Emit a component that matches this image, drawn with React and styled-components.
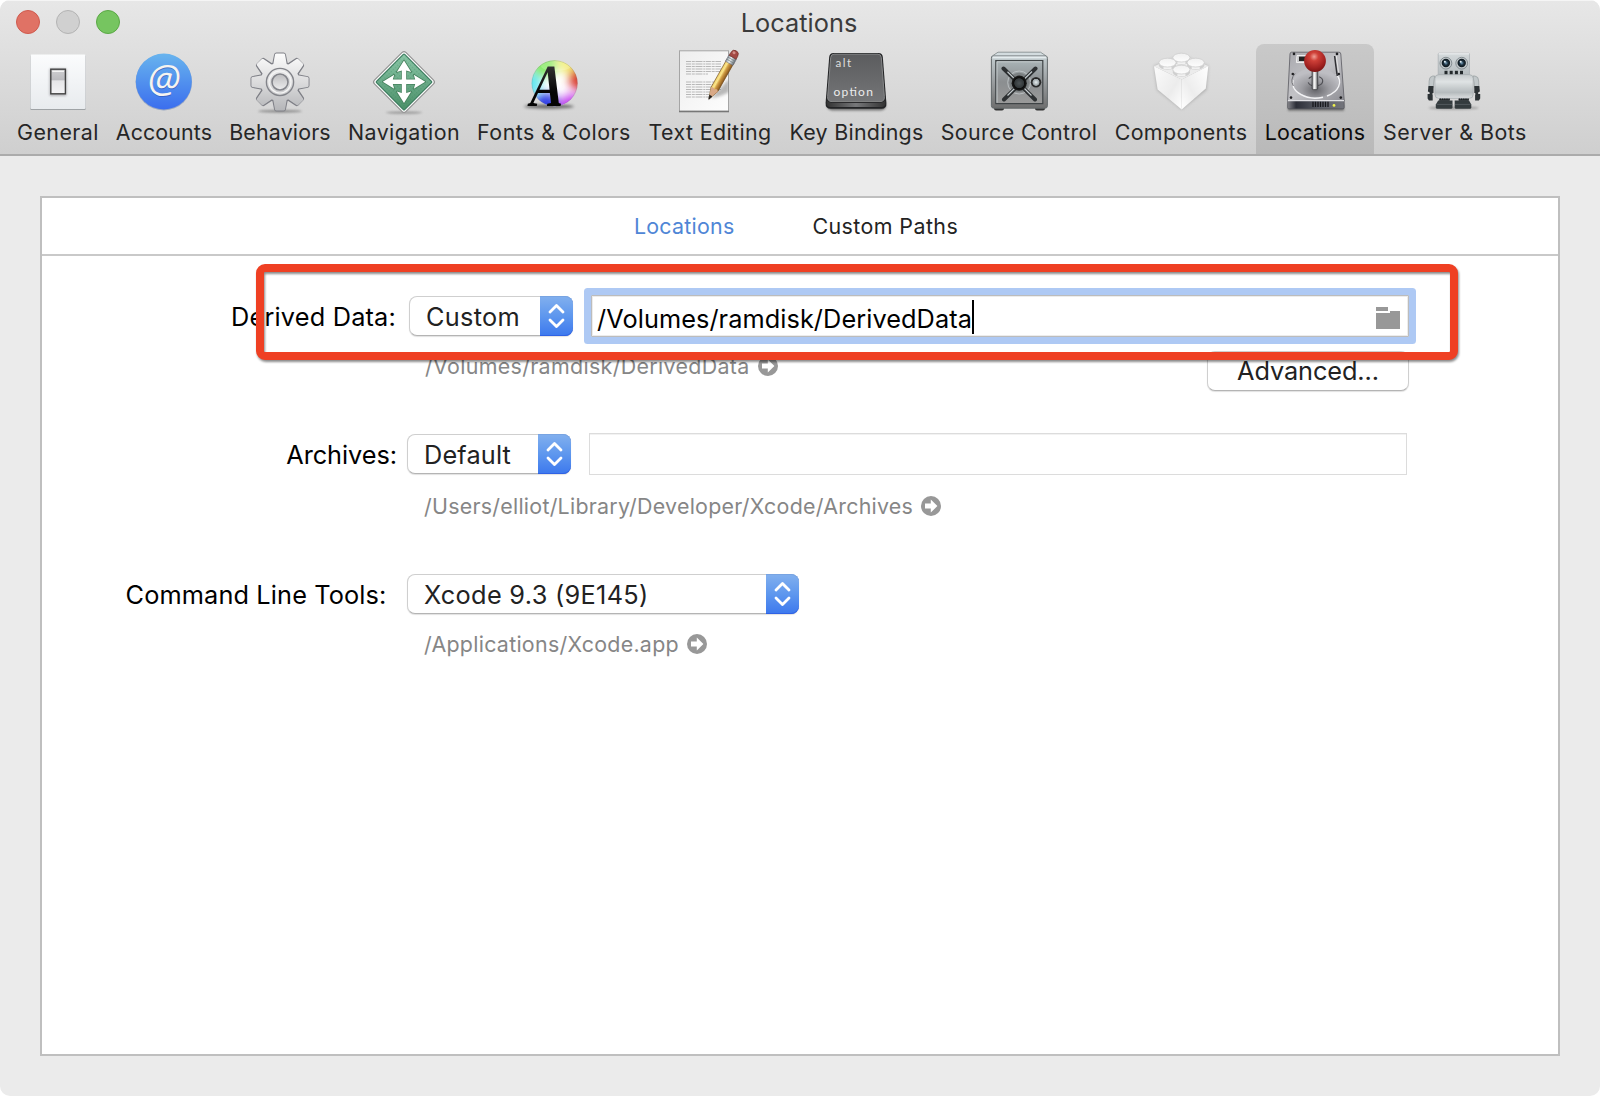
import React from "react";
import styled, { createGlobalStyle, css } from "styled-components";

const GlobalStyle = createGlobalStyle`
  *, *::before, *::after { box-sizing: border-box; }
  html, body { margin: 0; padding: 0; background: #fff; }
  body { font-family: Inter, "Liberation Sans", sans-serif; color: #000; }
`;

const SMALL = "21.4px";
const LARGE = "25.3px";

/* ---------- window ---------- */

const Window = styled.div`
  display: flex;
  flex-direction: column;
  width: 1600px;
  height: 1096px;
  background: #ebebeb;
  border-radius: 10px;
  overflow: hidden;
`;

const Header = styled.header`
  flex: none;
  height: 156px;
  display: flex;
  flex-direction: column;
  background: linear-gradient(#e7e7e7, #cfcfcf);
  border-top: 1px solid #f5f5f5;
  border-bottom: 2px solid #ababab;
`;

const TitleBar = styled.div`
  height: 43px;
  padding: 0 30px 2px 16px;
  display: grid;
  grid-template-columns: 104px 1fr 104px;
  align-items: center;
`;

const Lights = styled.div`
  display: flex;
  gap: 16px;
`;

const Light = styled.span`
  width: 24px;
  height: 24px;
  border-radius: 50%;
  background: ${(p) => p.$fill};
  border: 1px solid ${(p) => p.$edge};
`;

const Title = styled.h1`
  margin: 0;
  padding: 3px 0 0 12px;
  text-align: center;
  font-size: ${LARGE};
  font-weight: 400;
  line-height: 36px;
  letter-spacing: 0.05px;
  color: #3b3b3b;
`;

const Toolbar = styled.nav`
  display: flex;
  padding-left: 9px;
`;

const ToolItem = styled.button`
  width: ${(p) => p.$w}px;
  height: 110px;
  padding: 6px 0 0;
  border: 0;
  border-radius: 8px 8px 0 0;
  display: flex;
  flex-direction: column;
  align-items: center;
  font-family: inherit;
  color: ${(p) => (p.$active ? "#0c0c0c" : "#262626")};
  background: ${(p) => (p.$active ? "linear-gradient(#c9c9c9, #b9b9b9)" : "none")};
`;

const ToolLabel = styled.span`
  margin-top: 4px;
  font-size: ${SMALL};
  line-height: 28px;
  white-space: nowrap;
  letter-spacing: ${(p) => p.$ls}px;
`;

const Icon = styled.svg`
  display: block;
  width: 64px;
  height: 64px;
  flex: none;
  overflow: visible;
`;

/* ---------- panel ---------- */

const Content = styled.main`
  flex: 1;
  padding: 40px;
  display: flex;
`;

const Panel = styled.section`
  flex: 1;
  display: flex;
  flex-direction: column;
  background: #fff;
  border: 2px solid #bfbfbf;
`;

const Tabs = styled.div`
  height: 58px;
  flex: none;
  display: flex;
  justify-content: center;
  gap: 78px;
  padding: 14px 8px 0 0;
  border-bottom: 2px solid #c9c9c9;
`;

const Tab = styled.span`
  font-size: ${SMALL};
  line-height: 28px;
  letter-spacing: ${(p) => p.$ls}px;
  color: ${(p) => (p.$active ? "#4f86d6" : "#232323")};
`;

const Form = styled.div`
  position: relative;
  flex: 1;
  display: flex;
  flex-direction: column;
  padding: 32px 0 0;
`;

const Group = styled.div`
  display: flex;
  flex-direction: column;
  margin-top: ${(p) => p.$top || 0}px;
`;

const Row = styled.div`
  display: flex;
  align-items: center;
  height: ${(p) => p.$h}px;
`;

const Label = styled.label`
  width: ${(p) => p.$w}px;
  padding: 2px ${(p) => p.$gap}px 0 0;
  text-align: right;
  font-size: ${LARGE};
  line-height: 36px;
  white-space: nowrap;
  letter-spacing: ${(p) => p.$ls}px;
`;

const control = css`
  background: #fff;
  border: 1px solid #cfcfcf;
  border-bottom-color: #b4b4b4;
  border-radius: 8px;
  box-shadow: 0 1px 1px rgba(0, 0, 0, 0.12);
`;

const Popup = styled.div`
  ${control}
  width: ${(p) => p.$w}px;
  height: 40px;
  display: flex;
  justify-content: space-between;
`;

const PopupText = styled.span`
  padding: 2px 0 0 ${(p) => p.$pad}px;
  font-size: ${LARGE};
  line-height: 36px;
  letter-spacing: ${(p) => p.$ls}px;
  color: #222;
`;

const Stepper = styled.span`
  width: 33px;
  height: 40px;
  margin: -1px -1px 0 0;
  display: flex;
  align-items: center;
  justify-content: center;
  border-radius: 0 8px 8px 0;
  background: linear-gradient(#82b0ee, #5e97ee 50%, #3c78ee);
  box-shadow: inset 0 -1px 0 #2f62e4, inset 0 1px 0 #78a4e2;
`;

const PathField = styled.div`
  flex: none;
  width: 818px;
  height: 42px;
  margin-left: 18px;
  padding: 0 8px 0 5px;
  display: flex;
  align-items: center;
  background: #fff;
  border: ${(p) => (p.$focus ? "1px solid #bcbcbc" : "1px solid #dcdcdc")};
  box-shadow: inset 0 1px 0 #f2f2f2;
  ${(p) =>
    p.$focus &&
    css`
      border-radius: 1px;
      box-shadow: 0 0 0 7px #aec9f4, inset 0 0 0 1px #ececec;
    `}
`;

const FieldText = styled.span`
  padding-top: 6px;
  font-size: ${LARGE};
  line-height: 36px;
  letter-spacing: 0.075px;
`;

const Caret = styled.span`
  width: 2px;
  height: 34px;
  margin-top: 2px;
  background: #000;
`;

const FolderIcon = styled.svg`
  width: 24px;
  height: 22px;
  margin: 4px 0 0 auto;
`;

const SubRow = styled.div`
  display: flex;
  align-items: flex-start;
  justify-content: space-between;
  padding: ${(p) => p.$top}px 149px 0 ${(p) => p.$left}px;
`;

const PathLink = styled.span`
  display: flex;
  align-items: center;
  gap: 8px;
  height: 28px;
  font-size: ${SMALL};
  line-height: 28px;
  color: #868686;
  letter-spacing: ${(p) => p.$ls}px;
`;

const Button = styled.button`
  ${control}
  width: 202px;
  height: 40px;
  margin: -1px 0 1px;
  padding: 0;
  font-family: inherit;
  font-size: ${LARGE};
  line-height: 38px;
  letter-spacing: -0.1px;
  color: #222;
`;

const Highlight = styled.div`
  position: absolute;
  left: 214px;
  top: 8px;
  width: 1202px;
  height: 96px;
  border: 8px solid #ef4023;
  border-radius: 9px;
  filter: drop-shadow(1px 2px 1px rgba(0, 0, 0, 0.45));
  pointer-events: none;
`;

/* ---------- small glyphs ---------- */

const Chevrons = () => (
  <svg width="17" height="26" viewBox="0 0 17 26" fill="none" stroke="#fff" strokeWidth="2.8" strokeLinecap="round" strokeLinejoin="round">
    <path d="M2 9 L8.5 2.4 L15 9 M2 17 L8.5 23.6 L15 17" />
  </svg>
);

const GoArrow = () => (
  <svg width="20" height="20" viewBox="0 0 20 20">
    <circle cx="10" cy="10" r="10" fill="#989898" />
    <path d="M4 7.6 H9.8 V3.4 L16.4 10 L9.8 16.6 V12.4 H4 Z" fill="#fff" />
  </svg>
);

const Folder = () => (
  <FolderIcon viewBox="0 0 24 22">
    <path d="M0 0 H12 V4 H0 Z M0 6 H14 V4 H24 V22 H0 Z" fill="#989898" />
  </FolderIcon>
);

/* ---------- toolbar icons ---------- */

const GeneralIcon = () => (
  <Icon viewBox="0 0 64 64">
    <defs>
      <linearGradient id="gen" x1="0" y1="0" x2="0" y2="1">
        <stop offset="0" stopColor="#fbfcfd" /><stop offset="1" stopColor="#e8ebee" />
      </linearGradient>
      <linearGradient id="genSw" x1="0" y1="0" x2="0" y2="1">
        <stop offset="0" stopColor="#cfcfd1" /><stop offset=".42" stopColor="#bcbcc0" />
        <stop offset=".48" stopColor="#e6e6e8" /><stop offset="1" stopColor="#f4f4f6" />
      </linearGradient>
      <filter id="soft1" x="-50%" y="-50%" width="200%" height="200%"><feGaussianBlur stdDeviation="1.3" /></filter>
    </defs>
    <rect x="4.3" y="5" width="55.4" height="55" rx="1" fill="#9fa3a6" />
    <rect x="4.5" y="4.5" width="55" height="54.5" rx="1" fill="url(#gen)" />
    <rect x="23.5" y="18.5" width="17" height="27.5" rx="1" fill="#8e8e92" opacity=".6" filter="url(#soft1)" />
    <rect x="24.8" y="19.2" width="14.6" height="24.6" fill="url(#genSw)" stroke="#444" strokeWidth="1.4" />
    <rect x="26.2" y="20.8" width="11.8" height="1.2" fill="#f4f4f4" />
  </Icon>
);

const AccountsIcon = () => (
  <Icon viewBox="0 0 64 64">
    <defs>
      <linearGradient id="acc" x1="0" y1="0" x2="0" y2="1">
        <stop offset="0" stopColor="#68b4ee" /><stop offset="1" stopColor="#3b6eee" />
      </linearGradient>
    </defs>
    <circle cx="31.8" cy="32.3" r="28.2" fill="#6e87b4" opacity=".6" />
    <circle cx="31.8" cy="31.5" r="28" fill="url(#acc)" />
    <text x="32.3" y="43.8" textAnchor="middle" fontFamily="Open Sans, Noto Sans, sans-serif" fontStyle="italic" fontSize="38.5" fill="#2c4fae" opacity=".6">@</text>
    <text x="32" y="42.8" textAnchor="middle" fontFamily="Open Sans, Noto Sans, sans-serif" fontStyle="italic" fontSize="38.5" fill="#f6f4f0">@</text>
  </Icon>
);

const TEETH = [0, 45, 90, 135, 180, 225, 270, 315];

const BehaviorsIcon = () => (
  <Icon viewBox="0 0 64 64">
    <defs>
      <linearGradient id="gear" gradientUnits="userSpaceOnUse" x1="0" y1="3" x2="0" y2="61">
        <stop offset="0" stopColor="#fdfdfd" /><stop offset=".5" stopColor="#dcdcdd" /><stop offset="1" stopColor="#b4b5b8" />
      </linearGradient>
      <linearGradient id="gearIn" x1="0" y1="0" x2="0" y2="1">
        <stop offset="0" stopColor="#bcbcbe" /><stop offset="1" stopColor="#ededee" />
      </linearGradient>
      <filter id="soft2" x="-20%" y="-200%" width="140%" height="500%"><feGaussianBlur stdDeviation="1.2" /></filter>
      <path id="tooth" d="M27 4.4 Q27.3 3.4 28.4 3.4 H35.6 Q36.7 3.4 37 4.4 L39 14.5 H25 Z" />
    </defs>
    <ellipse cx="32" cy="61.3" rx="22" ry="1.5" fill="#555" opacity=".55" filter="url(#soft2)" />
    <g fill="none" stroke="#7e7f86" strokeWidth="1.8">
      {TEETH.map((a) => <use key={a} href="#tooth" transform={`rotate(${a} 32 32)`} />)}
      <circle cx="32" cy="32" r="19.5" />
    </g>
    <g fill="url(#gear)">
      <path d="M27 4.4 Q27.3 3.4 28.4 3.4 H35.6 Q36.7 3.4 37 4.4 L39 16 H25 Z" />
      <path d="M27 59.6 Q27.3 60.6 28.4 60.6 H35.6 Q36.7 60.6 37 59.6 L39 48 H25 Z" />
      <path d="M4.4 27 Q3.4 27.3 3.4 28.4 V35.6 Q3.4 36.7 4.4 37 L16 39 V25 Z" />
      <path d="M59.6 27 Q60.6 27.3 60.6 28.4 V35.6 Q60.6 36.7 59.6 37 L48 39 V25 Z" />
      <path d="M9 15.4 Q8.3 14.4 9.2 13.6 L13.6 9.2 Q14.4 8.3 15.4 9 L25.6 16 L16 25.6 Z" />
      <path d="M55 15.4 Q55.7 14.4 54.8 13.6 L50.4 9.2 Q49.6 8.3 48.6 9 L38.4 16 L48 25.6 Z" />
      <path d="M9 48.6 Q8.3 49.6 9.2 50.4 L13.6 54.8 Q14.4 55.7 15.4 55 L25.6 48 L16 38.4 Z" />
      <path d="M55 48.6 Q55.7 49.6 54.8 50.4 L50.4 54.8 Q49.6 55.7 48.6 55 L38.4 48 L48 38.4 Z" />
      <circle cx="32" cy="32" r="19.3" />
    </g>
    <circle cx="32" cy="32" r="13.6" fill="none" stroke="#83848a" strokeWidth="1.4" />
    <circle cx="32" cy="32" r="11" fill="none" stroke="#f5f5f5" strokeWidth="1.2" />
    <circle cx="32" cy="32" r="8" fill="url(#gearIn)" stroke="#83848a" strokeWidth="1.6" />
  </Icon>
);

const NavigationIcon = () => (
  <Icon viewBox="0 0 64 64">
    <defs>
      <linearGradient id="nav" x1="0" y1="0" x2="1" y2="1">
        <stop offset="0" stopColor="#8cc8a8" /><stop offset=".5" stopColor="#6bab89" /><stop offset="1" stopColor="#4b9068" />
      </linearGradient>
      <pattern id="weave" width="3" height="3" patternUnits="userSpaceOnUse">
        <rect width="1.4" height="1.4" fill="#2f7d54" opacity=".28" />
      </pattern>
      <filter id="soft3" x="-20%" y="-200%" width="140%" height="500%"><feGaussianBlur stdDeviation="1" /></filter>
    </defs>
    <ellipse cx="32" cy="62.6" rx="18" ry="1.1" fill="#555" opacity=".5" filter="url(#soft3)" />
    <rect x="9.8" y="9.8" width="44.4" height="44.4" rx="2.6" transform="rotate(45 32 32)" fill="#fff" stroke="#939393" strokeWidth="1.2" />
    <rect x="12" y="12" width="40" height="40" rx="1" transform="rotate(45 32 32)" fill="url(#nav)" stroke="#35775a" strokeWidth="1" />
    <rect x="12" y="12" width="40" height="40" rx="1" transform="rotate(45 32 32)" fill="url(#weave)" />
    <path d="M32 10.5 L39.2 22 L34.2 20.6 V29.6 H43.2 L41.8 24.8 L53.2 31.8 L41.8 38.8 L43.2 34 H34.2 V43 L39.2 41.6 L32 53 L24.8 41.6 L29.8 43 V34 H20.8 L22.2 38.8 L10.8 31.8 L22.2 24.8 L20.8 29.6 H29.8 V20.6 L24.8 22 Z" fill="#fff" stroke="#47835f" strokeWidth="1.6" paintOrder="stroke" strokeLinejoin="round" />
  </Icon>
);

const FontsIcon = () => (
  <Icon viewBox="0 0 64 64">
    <defs>
      <clipPath id="globe"><circle cx="32.6" cy="33.3" r="23" /></clipPath>
      <filter id="soft4" x="-60%" y="-60%" width="220%" height="220%"><feGaussianBlur stdDeviation="5" /></filter>
      <filter id="soft5" x="-30%" y="-200%" width="160%" height="500%"><feGaussianBlur stdDeviation="1.8" /></filter>
      <linearGradient id="inkA" x1="0" y1="0" x2="0" y2="1">
        <stop offset="0" stopColor="#4a4a4a" /><stop offset=".6" stopColor="#050505" />
      </linearGradient>
    </defs>
    <ellipse cx="27" cy="56.5" rx="25" ry="2.2" fill="#000" opacity=".5" filter="url(#soft5)" />
    <g clipPath="url(#globe)">
      <rect x="9" y="10" width="48" height="48" fill="#fff" />
      <g filter="url(#soft4)">
        <circle cx="22" cy="14" r="13" fill="#86ea62" />
        <circle cx="46" cy="12" r="11" fill="#f3ee6c" />
        <circle cx="59" cy="29" r="12" fill="#d8342c" />
        <circle cx="50" cy="56" r="12" fill="#c53df0" />
        <circle cx="24" cy="57" r="14" fill="#3340e6" />
        <circle cx="7" cy="34" r="12" fill="#5fe6f0" />
      </g>
      <ellipse cx="34" cy="16" rx="15" ry="5" fill="#fff" opacity=".2" />
    </g>
    <circle cx="32.6" cy="33.3" r="22.7" fill="none" stroke="#777" strokeOpacity=".35" strokeWidth=".8" />
    <g transform="translate(5 56) skewX(-10)">
      <text x="0" y="0" fontFamily="Liberation Serif, serif" fontWeight="700" fontSize="60" textLength="34" lengthAdjust="spacingAndGlyphs" fill="url(#inkA)">A</text>
    </g>
  </Icon>
);

const LINES = [11.5, 14, 16.5, 19, 21.5, 24, 32, 34.5, 37, 39.5, 42, 44.5, 47];

const TextEditingIcon = () => (
  <Icon viewBox="0 0 64 64">
    <defs>
      <linearGradient id="page" x1="0" y1="0" x2="1" y2="1">
        <stop offset="0" stopColor="#eeeeee" /><stop offset="1" stopColor="#fdfdfd" />
      </linearGradient>
      <linearGradient id="wood" gradientUnits="userSpaceOnUse" x1="0" y1="0" x2="8" y2="0">
        <stop offset="0" stopColor="#f0cf68" /><stop offset=".3" stopColor="#fbe68c" /><stop offset=".55" stopColor="#cf9a42" /><stop offset="1" stopColor="#87541c" />
      </linearGradient>
      <linearGradient id="metal" gradientUnits="userSpaceOnUse" x1="0" y1="0" x2="8" y2="0">
        <stop offset="0" stopColor="#9aa6ac" /><stop offset=".4" stopColor="#eef3f5" /><stop offset="1" stopColor="#6d777c" />
      </linearGradient>
      <filter id="soft6" x="-30%" y="-30%" width="160%" height="160%"><feGaussianBlur stdDeviation="1.5" /></filter>
      <clipPath id="pageClip"><rect x="1" y="0" width="50" height="61" /></clipPath>
    </defs>
    <rect x="1" y="2" width="50" height="61" fill="#888" opacity=".35" />
    <rect x="1.5" y=".8" width="49" height="60.4" fill="url(#page)" stroke="#a5a5a5" strokeWidth="1" />
    <path d="M1 61.3 H51" stroke="#777" strokeWidth="1.2" />
    {LINES.map((y, i) => (
      <path key={y} d={`M8 ${y} H${i === 5 ? 30 : i > 9 ? 33 : 43}`} stroke="#b8b8b8" strokeWidth="1" strokeDasharray="5 .8 3 .7 7 .8 2 .6" />
    ))}
    <path d="M33 48 L51 29 V42 Q42 47 33 48 Z" fill="#777" opacity=".5" filter="url(#soft6)" clipPath="url(#pageClip)" />
    <g transform="translate(31 49) rotate(29.5) translate(-4 -52)">
      <path d="M0 8 H8 V41 L4 52 L0 41 Z" fill="url(#wood)" stroke="#6e4a1c" strokeWidth=".6" />
      <path d="M0 41 Q2 38.5 4 41 Q6 38.5 8 41 L4 52 Z" fill="#d9a987" />
      <path d="M2.6 48.4 H5.4 L4 52.4 Z" fill="#1c1c1c" stroke="#1c1c1c" strokeWidth=".6" />
      <rect x="-.3" y="4" width="8.6" height="7" fill="url(#metal)" stroke="#667" strokeWidth=".5" />
      <path d="M-.3 6.3 H8.3 M-.3 8.6 H8.3" stroke="#6c767b" strokeWidth=".6" />
      <path d="M0 4 V1 Q0 -3.4 4 -3.4 Q8 -3.4 8 1 V4 Z" fill="#a34a45" stroke="#713029" strokeWidth=".6" />
      <ellipse cx="3" cy="-.6" rx="1.6" ry="1.4" fill="#d38f88" />
    </g>
  </Icon>
);

const KeyIcon = () => (
  <Icon viewBox="0 0 64 64">
    <defs>
      <linearGradient id="key" x1="0" y1="0" x2="0" y2="1">
        <stop offset="0" stopColor="#5b5c5e" /><stop offset="1" stopColor="#747577" />
      </linearGradient>
      <linearGradient id="keyB" x1="0" y1="0" x2="1" y2="0">
        <stop offset="0" stopColor="#333" /><stop offset=".5" stopColor="#77787a" /><stop offset="1" stopColor="#333" />
      </linearGradient>
      <filter id="soft7" x="-20%" y="-20%" width="140%" height="150%"><feGaussianBlur stdDeviation="1.2" /></filter>
    </defs>
    <rect x="2" y="50" width="59" height="10.5" rx="5" fill="#333" opacity=".6" filter="url(#soft7)" />
    <path d="M8.5 3 H53.5 Q57.4 3 57.8 7 L61.4 53 Q61.8 58.8 56.4 58.8 H5.8 Q.2 58.8 .6 53 L4.2 7 Q4.6 3 8.5 3 Z" fill="#222325" />
    <path d="M1.7 50 Q4 53 8 53 H54 Q58 53 60.3 50 L60.4 53 Q60.6 57 56.4 57 H5.6 Q1.4 57 1.6 53 Z" fill="url(#keyB)" />
    <path d="M9 4.2 H53 Q56 4.2 56.3 7.4 L59.4 46.6 Q59.8 51.6 55 51.6 H7 Q2.2 51.6 2.6 46.6 L5.7 7.4 Q6 4.2 9 4.2 Z" fill="url(#key)" stroke="#8d8e90" strokeWidth=".9" />
    <text x="10.6" y="17" fontFamily="Lato, sans-serif" fontSize="11.6" textLength="15.5" fill="#dedede">alt</text>
    <text x="8.4" y="46" fontFamily="Lato, sans-serif" fontSize="12" textLength="39.5" fill="#ececec">option</text>
  </Icon>
);

const SafeIcon = () => (
  <Icon viewBox="0 0 64 64">
    <defs>
      <linearGradient id="safe" x1="0" y1="0" x2="0" y2="1">
        <stop offset="0" stopColor="#c3cdd0" /><stop offset=".5" stopColor="#999d9f" /><stop offset="1" stopColor="#6e6e6e" />
      </linearGradient>
      <linearGradient id="door" x1="0" y1="0" x2="0" y2="1">
        <stop offset="0" stopColor="#a9b3b6" /><stop offset=".5" stopColor="#8b8e90" /><stop offset="1" stopColor="#9a9a9a" />
      </linearGradient>
      <radialGradient id="hub"><stop offset="0" stopColor="#4d5356" /><stop offset=".6" stopColor="#33383a" /><stop offset=".7" stopColor="#0c0c0c" /><stop offset="1" stopColor="#1c1c1c" /></radialGradient>
      <radialGradient id="knob"><stop offset="0" stopColor="#e8eef0" /><stop offset=".6" stopColor="#9ba3a6" /><stop offset=".72" stopColor="#222" /><stop offset="1" stopColor="#333" /></radialGradient>
    </defs>
    <rect x="7" y="56" width="10" height="4.6" rx="2" fill="#333" />
    <rect x="48" y="56" width="10" height="4.6" rx="2" fill="#333" />
    <path d="M11 2.2 H53.5 L60 6.5 V8 H4.5 V6.5 Z" fill="#d3dcdf" stroke="#7e8688" strokeWidth=".8" />
    <rect x="4.4" y="6" width="56" height="52.2" rx="2.4" fill="url(#safe)" stroke="#646a6c" strokeWidth="1" />
    <rect x="5.4" y="6.4" width="54" height="2" fill="#e4ecee" />
    <rect x="8.8" y="10.6" width="47" height="43" fill="url(#door)" stroke="#3f4446" strokeWidth="1.2" />
    <path d="M10 52.8 V11.8 H55" stroke="#c9d0d2" strokeWidth=".9" fill="none" />
    <circle cx="32.2" cy="32.5" r="11.5" fill="none" stroke="#c2c8ca" strokeWidth=".8" />
    <circle cx="32.2" cy="32.5" r="9.8" fill="#7b8082" />
    <path d="M16.5 18.5 L48 49.5 M48.5 18.5 L17 49.5" stroke="#2d3032" strokeWidth="4" strokeLinecap="round" />
    <path d="M20.5 21.8 L44.5 45.5 M45 21.5 L20.5 45.5" stroke="#c5cccf" strokeWidth="1.2" />
    <circle cx="32.2" cy="33.2" r="7.6" fill="url(#hub)" />
    <circle cx="49" cy="32.3" r="5.3" fill="url(#knob)" />
  </Icon>
);

const BrickIcon = () => (
  <Icon viewBox="1 0 64 64">
    <defs>
      <linearGradient id="brL" x1="0" y1="0" x2="1" y2="1"><stop offset="0" stopColor="#fbfbfb" /><stop offset=".6" stopColor="#ececec" /><stop offset="1" stopColor="#fff" /></linearGradient>
      <linearGradient id="brR" x1="1" y1="0" x2="0" y2="1"><stop offset="0" stopColor="#fff" /><stop offset=".6" stopColor="#ededed" /><stop offset="1" stopColor="#fff" /></linearGradient>
      <linearGradient id="stud" x1="0" y1="0" x2="0" y2="1"><stop offset="0" stopColor="#f0f0f0" /><stop offset="1" stopColor="#fdfdfd" /></linearGradient>
      <filter id="soft8" x="-20%" y="-20%" width="140%" height="140%"><feGaussianBlur stdDeviation="1.8" /></filter>
    </defs>
    <path d="M6 16 L33.5 5 L60.3 16 L58.5 40 L33.7 59.5 L9 40 Z" fill="#888" opacity=".5" filter="url(#soft8)" />
    <path d="M6 16.3 L33.5 4.5 L60.3 16 L33.7 29.5 Z" fill="#ececec" />
    <path d="M6 16.3 L33.7 29.5 V59.4 L9.6 39.5 Z" fill="url(#brL)" />
    <path d="M60.3 16 L33.7 29.5 V59.4 L57.8 38.5 Z" fill="url(#brR)" />
    {[[33.4, 7.6], [19.5, 12.6], [47.7, 12.6], [33.4, 19.6]].map(([x, y]) => (
      <g key={`${x}-${y}`}>
        <path d={`M${x - 8.6} ${y} V${y + 2.6} A8.6 4.6 0 0 0 ${x + 8.6} ${y + 2.6} V${y} Z`} fill="#cfcfcf" />
        <path d={`M${x - 4} ${y} V${y + 6.6} H${x + 4} V${y} Z`} fill="#f1f1f1" />
        <ellipse cx={x} cy={y} rx="8.6" ry="4.4" fill="url(#stud)" stroke="#cecece" strokeWidth=".8" />
      </g>
    ))}
  </Icon>
);

const DriveIcon = () => (
  <Icon viewBox="0 0 64 64">
    <defs>
      <linearGradient id="drv" x1="0" y1="0" x2="1" y2="1"><stop offset="0" stopColor="#a9a9ae" /><stop offset=".5" stopColor="#c2c2c6" /><stop offset="1" stopColor="#8f8f95" /></linearGradient>
      <radialGradient id="disc" cx=".5" cy=".75" r=".6"><stop offset="0" stopColor="#66666b" /><stop offset=".5" stopColor="#9c9ca1" /><stop offset="1" stopColor="#bebec3" /></radialGradient>
      <linearGradient id="front" x1="0" y1="0" x2="1" y2="0"><stop offset="0" stopColor="#85858b" /><stop offset=".15" stopColor="#2d2f38" /><stop offset=".6" stopColor="#5d6068" /><stop offset="1" stopColor="#73747b" /></linearGradient>
      <radialGradient id="ball" cx=".46" cy=".3" r=".7"><stop offset="0" stopColor="#f0a096" /><stop offset=".28" stopColor="#cf4038" /><stop offset=".75" stopColor="#a02120" /><stop offset="1" stopColor="#7c1414" /></radialGradient>
      <linearGradient id="stick" x1="0" y1="0" x2="1" y2="0"><stop offset="0" stopColor="#55565a" /><stop offset=".35" stopColor="#fff" /><stop offset=".6" stopColor="#d8d8d8" /><stop offset="1" stopColor="#4e4f52" /></linearGradient>
      <filter id="soft9" x="-20%" y="-100%" width="140%" height="300%"><feGaussianBlur stdDeviation="1.2" /></filter>
    </defs>
    <rect x="5" y="54" width="56" height="6.6" fill="#333" opacity=".6" filter="url(#soft9)" />
    <path d="M8.5 2.2 H56 Q57.6 2.2 57.8 4 L61.2 50.5 H4.6 L7 4 Q7.2 2.2 8.5 2.2 Z" fill="url(#drv)" stroke="#6e6e74" strokeWidth="1" />
    <path d="M4.6 50.5 H61.2 V57.6 Q61.2 58.8 60 58.8 H5.8 Q4.6 58.8 4.6 57.6 Z" fill="url(#front)" stroke="#4c4d54" strokeWidth=".6" />
    <path d="M4.8 50.6 H61" stroke="#e2e2e5" strokeWidth="1.2" />
    <ellipse cx="32.6" cy="32.5" rx="22.7" ry="15" fill="url(#disc)" />
    <path d="M10 30 A22.7 15.4 0 0 0 40 47.2" fill="none" stroke="#f2f2f4" strokeWidth="1.4" />
    <path d="M44 46 A22.7 15.4 0 0 0 53 24" fill="none" stroke="#f2f2f4" strokeWidth="1.4" />
    <path d="M12 23.5 A22.7 15 0 0 0 10.3 36" fill="none" stroke="#6b6b70" strokeWidth="1" />
    <ellipse cx="32.3" cy="31" rx="7.4" ry="5" fill="none" stroke="#4f4f54" strokeWidth="1.1" strokeDasharray="7 4" />
    <path d="M14 5.5 H23 V12.5 H13.4 Z" fill="#c8c8cb" stroke="#f3f3f3" strokeWidth=".9" />
    <rect x="16" y="6.6" width="6.8" height="4.4" fill="#222" />
    <path d="M51.6 6 L54.2 26" stroke="#2f2f33" strokeWidth="1.5" />
    <path d="M53.3 6 L55.8 24" stroke="#ededed" strokeWidth=".8" />
    {[[11, 3.9], [54, 3.9], [9.8, 24], [55.8, 24], [8, 47.6], [57.8, 47.6]].map(([x, y]) => (
      <circle key={`${x}-${y}`} cx={x} cy={y} r="1.3" fill="#1f1f22" />
    ))}
    <path d="M30 51.8 V57 M32.5 51.8 V57 M35 51.8 V57 M37.5 51.8 V57 M40 51.8 V57 M42.5 51.8 V57 M45 51.8 V57" stroke="#17181c" strokeWidth="1.3" />
    <circle cx="51" cy="55.4" r="1.4" fill="#eef04c" />
    <rect x="29" y="20" width="5.8" height="19.6" rx="1.5" fill="url(#stick)" stroke="#3c3c40" strokeWidth=".7" />
    <circle cx="32" cy="11" r="10.9" fill="url(#ball)" />
  </Icon>
);

const BotIcon = () => (
  <Icon viewBox="1.3 0 64 64">
    <defs>
      <linearGradient id="botH" x1="0" y1="0" x2="0" y2="1"><stop offset="0" stopColor="#d5dadc" /><stop offset="1" stopColor="#b3babd" /></linearGradient>
      <linearGradient id="botB" x1="0" y1="0" x2="0" y2="1"><stop offset="0" stopColor="#c5cacc" /><stop offset=".3" stopColor="#dfe3e4" /><stop offset=".75" stopColor="#b5bbbd" /><stop offset="1" stopColor="#dcdfe0" /></linearGradient>
      <radialGradient id="eye" cx=".5" cy=".5" r=".5"><stop offset="0" stopColor="#7aa3bf" /><stop offset=".5" stopColor="#1c303e" /><stop offset="1" stopColor="#0d1519" /></radialGradient>
      <filter id="soft10" x="-20%" y="-100%" width="140%" height="300%"><feGaussianBlur stdDeviation="1.3" /></filter>
    </defs>
    <ellipse cx="32" cy="58" rx="25" ry="1.8" fill="#444" opacity=".35" filter="url(#soft10)" />
    <rect x="16.5" y="3.2" width="31.3" height="23.5" rx="1" fill="url(#botH)" stroke="#a7aeb1" strokeWidth=".7" />
    <path d="M17 3.8 H47.4" stroke="#f2f4f5" strokeWidth="1" />
    {[24.2, 40].map((x) => (
      <g key={x}>
        <circle cx={x} cy="13.2" r="5.9" fill="#c2c8cb" stroke="#7d868a" strokeWidth=".9" />
        <circle cx={x} cy="13" r="4.2" fill="url(#eye)" />
        <circle cx={x - 1} cy="11.8" r="1" fill="#e3f0f7" />
      </g>
    ))}
    {[22.8, 28, 33.2, 38.3].map((x) => <rect key={x} x={x} y="20.8" width="3" height="5" fill="#22282b" />)}
    <path d="M13 26 H11 Q7.4 26.5 7.4 31 L7.2 38 H11.4 L12 33 Z" fill="#c2c8ca" stroke="#8b9396" strokeWidth=".6" />
    <path d="M51.3 26 H53.3 Q57 26.5 57 31 L57.2 38 H53 L52.4 33 Z" fill="#c2c8ca" stroke="#8b9396" strokeWidth=".6" />
    <path d="M6.8 36 H11.8 V43 H10.8 V45 H11 V50.4 H7.2 L5.9 48.5 V44 H8 L7.8 42.3 L6.2 41.5 Z" fill="#2c3235" />
    <path d="M57.6 36 H52.6 V43 H53.6 V45 H53.4 V50.4 H57.2 L58.5 48.5 V44 H56.4 L56.6 42.3 L58.2 41.5 Z" fill="#2c3235" />
    <path d="M17.5 47 H28 V51 H17.5 Z M37 47 H47 V51 H37 Z" fill="#3a4043" />
    <rect x="13.2" y="24.6" width="38.3" height="23.8" rx="4" fill="url(#botB)" stroke="#a2a9ac" strokeWidth=".7" />
    <path d="M18 49.2 H28 M37 49.2 H47" stroke="#1c2022" strokeWidth="1.6" strokeDasharray="1.4 .8" />
    <path d="M16.5 50.4 H30.8 V57.3 Q30.8 58.8 29.3 58.8 H15.6 Q14.1 58.8 14.1 57.3 V54.5 Z" fill="#343b3e" />
    <path d="M33 50.4 H47.3 L49.6 54.5 V57.3 Q49.6 58.8 48.1 58.8 H34.5 Q33 58.8 33 57.3 Z" fill="#343b3e" />
    <path d="M15 54.4 H30.6 M33.2 54.4 H49" stroke="#596165" strokeWidth=".8" />
  </Icon>
);

const TOOLS = [
  { label: "General", w: 98, ls: 0.45, icon: GeneralIcon },
  { label: "Accounts", w: 114, ls: 0.13, icon: AccountsIcon },
  { label: "Behaviors", w: 118, ls: 0.16, icon: BehaviorsIcon },
  { label: "Navigation", w: 130, ls: 0.43, icon: NavigationIcon },
  { label: "Fonts & Colors", w: 170, ls: 0.49, icon: FontsIcon },
  { label: "Text Editing", w: 142, ls: 0.39, icon: TextEditingIcon },
  { label: "Key Bindings", w: 151, ls: 0.28, icon: KeyIcon },
  { label: "Source Control", w: 174, ls: 0.37, icon: SafeIcon },
  { label: "Components", w: 150, ls: 0.37, icon: BrickIcon },
  { label: "Locations", w: 118, ls: 0.25, icon: DriveIcon, active: true },
  { label: "Server & Bots", w: 162, ls: 0.49, icon: BotIcon },
];

export default function App() {
  return (
    <>
      <GlobalStyle />
      <Window>
        <Header>
          <TitleBar>
            <Lights>
              <Light $fill="#e07265" $edge="#cf5a4e" />
              <Light $fill="#d0d0d0" $edge="#b3b3b3" />
              <Light $fill="#76c560" $edge="#5aa845" />
            </Lights>
            <Title>Locations</Title>
          </TitleBar>
          <Toolbar>
            {TOOLS.map(({ label, w, ls, icon: Glyph, active }) => (
              <ToolItem key={label} $w={w} $active={active}>
                <Glyph />
                <ToolLabel $ls={ls}>{label}</ToolLabel>
              </ToolItem>
            ))}
          </Toolbar>
        </Header>

        <Content>
          <Panel>
            <Tabs>
              <Tab $active $ls={0.25}>Locations</Tab>
              <Tab $ls={0.43}>Custom Paths</Tab>
            </Tabs>

            <Form>
              <Group>
                <Row $h={56}>
                  <Label $w={367} $gap={13} $ls={0.19}>Derived Data:</Label>
                  <Popup $w={164}>
                    <PopupText $pad={16} $ls={0.3}>Custom</PopupText>
                    <Stepper><Chevrons /></Stepper>
                  </Popup>
                  <PathField $focus>
                    <FieldText>/Volumes/ramdisk/DerivedData</FieldText>
                    <Caret />
                    <Folder />
                  </PathField>
                </Row>
                <SubRow $top={8} $left={383}>
                  <PathLink $ls={0.33}>/Volumes/ramdisk/DerivedData<GoArrow /></PathLink>
                  <Button>Advanced...</Button>
                </SubRow>
              </Group>

              <Group $top={41}>
                <Row $h={42}>
                  <Label $w={365} $gap={10} $ls={-0.05}>Archives:</Label>
                  <Popup $w={164}>
                    <PopupText $pad={16} $ls={0.15}>Default</PopupText>
                    <Stepper><Chevrons /></Stepper>
                  </Popup>
                  <PathField />
                </Row>
                <SubRow $top={17} $left={382}>
                  <PathLink $ls={0.26}>/Users/elliot/Library/Developer/Xcode/Archives<GoArrow /></PathLink>
                </SubRow>
              </Group>

              <Group $top={54}>
                <Row $h={40}>
                  <Label $w={365} $gap={20.5} $ls={0.13}>Command Line Tools:</Label>
                  <Popup $w={392}>
                    <PopupText $pad={16} $ls={0.31}>Xcode 9.3 (9E145)</PopupText>
                    <Stepper><Chevrons /></Stepper>
                  </Popup>
                </Row>
                <SubRow $top={16} $left={382}>
                  <PathLink $ls={0.275}>/Applications/Xcode.app<GoArrow /></PathLink>
                </SubRow>
              </Group>

              <Highlight />
            </Form>
          </Panel>
        </Content>
      </Window>
    </>
  );
}
